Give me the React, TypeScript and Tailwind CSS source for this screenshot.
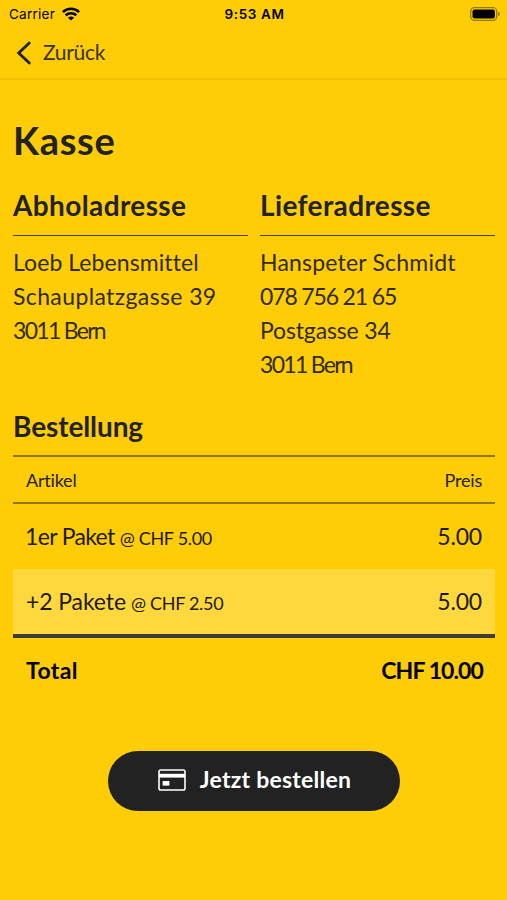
import { ReactNode } from "react";

const items = [
  { name: "1er Paket", unit: "@ CHF 5.00", price: "5.00", nameClass: "-ml-px tracking-[-0.65px]", highlight: false },
  { name: "+2 Pakete", unit: "@ CHF 2.50", price: "5.00", nameClass: "tracking-[-0.1px]", highlight: true },
];

const StatusBar = () => (
  <div className="grid h-7 grid-cols-3 items-center pl-[9px] pr-[6px] font-['Inter',sans-serif] text-[13.5px] text-black">
    <div className="flex items-center gap-[7px]">
      <span className="tracking-[0.25px]">Carrier</span>
      <svg width="18" height="14" viewBox="0 0 18 14" fill="none" stroke="currentColor" strokeWidth="2.6">
        <path d="M.9 5.1C5.4.7 12.6.7 17.1 5.1" />
        <path d="M3.7 8.3c3-2.8 7.6-2.8 10.6 0" />
        <path d="M6 10.7c1.6-1.6 4.4-1.6 6 0l-3 2.9z" fill="currentColor" stroke="none" />
      </svg>
    </div>
    <div className="-ml-px text-center font-semibold tracking-[0.6px]">9:53 AM</div>
    <svg className="justify-self-end" width="31" height="14" viewBox="0 0 31 14">
      <rect x=".7" y=".7" width="26" height="12.6" rx="3.8" fill="none" stroke="#000" strokeOpacity=".4" strokeWidth="1.3" />
      <rect x="2.5" y="2.5" width="22.4" height="9" rx="2" />
      <path d="M28.2 4.8v4.4c2.2-.8 2.2-3.6 0-4.4z" fillOpacity=".45" />
    </svg>
  </div>
);

const Address = ({ title, children }: { title: string; children: ReactNode }) => (
  <div>
    <h2 className="border-b border-[#4d4412] pb-[10px] text-[28px] font-bold leading-10 tracking-[0.38px]">{title}</h2>
    <div className="flex flex-col items-start pt-[9px] text-[23px] leading-[34px] text-[#302b10]">{children}</div>
  </div>
);

const App = () => {
  return (
    <div className="min-h-screen bg-[#ffcd05] font-['Lato',sans-serif] text-[#222] [font-variant-ligatures:none]">
      <StatusBar />
      <header className="flex h-[52px] items-center gap-[11px] border-b-2 border-[#f3c104] pl-4 text-[21px]">
        <svg width="16" height="24" viewBox="0 0 16 24" fill="none" stroke="currentColor" strokeWidth="2.8" strokeLinecap="round">
          <path d="M13.3 2 2.7 12l10.6 10" />
        </svg>
        <span className="pb-[2px] tracking-[-0.3px] text-[#3a3310]">Zurück</span>
      </header>

      <main className="pl-[13px] pr-3 pt-9">
        <h1 className="text-[38px] font-bold leading-[48px] tracking-[0.7px]">Kasse</h1>

        <div className="mt-[21px] grid grid-cols-2 gap-x-3">
          <Address title="Abholadresse">
            <span className="tracking-[0.08px]">Loeb Lebensmittel</span>
            <span className="tracking-[0.38px]">Schauplatzgasse 39</span>
            <span className="tracking-[-1.7px]">3011 Bern</span>
          </Address>
          <Address title="Lieferadresse">
            <span className="tracking-[0.2px]">Hanspeter Schmidt</span>
            <span className="tracking-[-1.15px]">078 756 21 65</span>
            <span className="tracking-[-0.15px]">Postgasse 34</span>
            <span className="tracking-[-1.7px]">3011 Bern</span>
          </Address>
        </div>

        <h2 className="mt-[25px] pb-[9px] text-[28px] font-bold leading-10 tracking-[-0.1px]">Bestellung</h2>
        <div className="flex h-[49px] items-center justify-between border-y-2 border-[#8f7710] pl-[13px] pr-[13px] text-lg tracking-[-0.2px]">
          <span>Artikel</span>
          <span>Preis</span>
        </div>
        {items.map((item) => (
          <div
            key={item.name}
            className={`flex h-[65px] items-center justify-between px-[13px] text-[23px] text-[#1c1a08] ${item.highlight ? "bg-[#ffd83d]" : ""}`}
          >
            <div className="flex items-baseline gap-[5px]">
              <span className={item.nameClass}>{item.name}</span>
              <span className="text-lg tracking-[-0.3px]">{item.unit}</span>
            </div>
            <span className="tracking-[-0.2px]">{item.price}</span>
          </div>
        ))}
        <div className="flex h-[69px] items-center justify-between border-t-4 border-[#403d38] px-[13px] text-[23px] font-bold text-black">
          <span className="tracking-[0.4px]">Total</span>
          <span className="-mr-px tracking-[-0.9px]">CHF 10.00</span>
        </div>

        <button className="mx-auto mt-12 flex h-[60px] w-[292px] items-center justify-center gap-[14px] rounded-full bg-[#222] pb-[3px] pl-px text-[23px] font-bold text-white">
          <svg width="28" height="22" viewBox="0 0 28 22" fill="none" stroke="currentColor" strokeWidth="1.6">
            <rect x="1" y="1" width="26" height="20" rx="1.8" />
            <path d="M1 6.7h26" strokeWidth="3.8" />
            <rect x="4.6" y="12" width="6.8" height="4.6" fill="currentColor" stroke="none" />
          </svg>
          <span className="tracking-[0.25px]">Jetzt bestellen</span>
        </button>
      </main>
    </div>
  );
};

export default App;
